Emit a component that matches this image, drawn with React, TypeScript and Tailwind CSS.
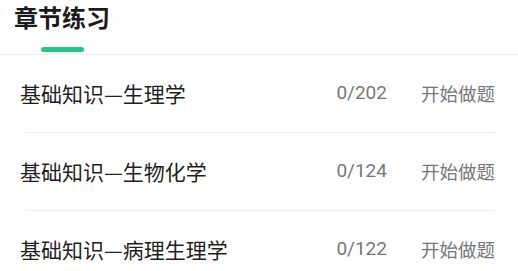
const FONT = { fontFamily: '"Noto Sans CJK SC", "Noto Sans", sans-serif' };

const chapters = [
  { name: "基础知识—生理学", done: 0, total: 202 },
  { name: "基础知识—生物化学", done: 0, total: 124 },
  { name: "基础知识—病理生理学", done: 0, total: 122 },
];

export default function App() {
  return (
    <div className="w-[518px] h-[271px] overflow-hidden bg-white" style={FONT}>
      {/* header with tab indicator */}
      <div className="h-[55px] border-b border-[#eeeeee] pl-[14px] flex flex-col">
        <h1 className="mt-[3px] text-[24px] leading-[28px] font-bold text-[#1a1a1a]">章节练习</h1>
        <div className="mt-[16px] ml-[27px] w-[43px] h-[5px] rounded-full bg-[#1fca86]" />
      </div>

      {chapters.map((c, i) => (
        <div key={i}>
          <div className="h-[77px] flex items-center pl-[20px] pr-[23px]">
            <span className="flex-1 text-[21px] text-[#1f1f1f]">{c.name}</span>
            <span className="text-[19px] text-[#777777] font-['Roboto','Noto_Sans',sans-serif]">
              {c.done}/{c.total}
            </span>
            <span className="ml-[34px] text-[18.5px] text-[#777777]">开始做题</span>
          </div>
          <div className="ml-[26px] mr-[23px] h-px bg-[#eeeeee]" />
        </div>
      ))}
    </div>
  );
}
